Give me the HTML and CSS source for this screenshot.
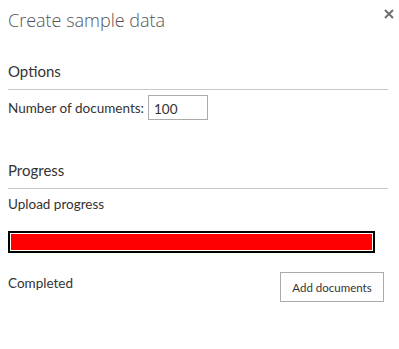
FILE: index.html
```html
<!DOCTYPE html>
<html>
<head>
<meta charset="utf-8">
<link rel="stylesheet" href="styles.css">
</head>
<body>
<div class="dialog">
  <div class="header">
    <div class="title">Create sample data</div>
    <button class="close" aria-label="Close">
      <svg width="10" height="10" viewBox="0 0 10 10"><path d="M1 1 L9 9 M9 1 L1 9" stroke="#707070" stroke-width="2" fill="none"/></svg>
    </button>
  </div>
  <h2 class="section options">Options</h2>
  <div class="field">
    <label class="label" for="num">Number of documents:</label>
    <input id="num" class="input" type="text" value="100">
  </div>
  <h2 class="section progress-head">Progress</h2>
  <div class="sub">Upload progress</div>
  <div class="bar"><div class="fill" style="width:100%"></div></div>
  <div class="footer">
    <div class="status">Completed</div>
    <button class="btn">Add documents</button>
  </div>
</div>
</body>
</html>
```
FILE: styles.css
```css
html, body {
  margin: 0;
  padding: 0;
  background: #fff;
}
body {
  font-family: Lato, "Open Sans", sans-serif;
  color: #333;
}
.dialog {
  position: relative;
  width: 380px;
  padding: 0 11px 0 8px;
}
.header {
  display: flex;
}
.title {
  margin-top: 8px;
  font-family: "Open Sans", sans-serif;
  font-size: 18px;
  font-weight: 300;
  line-height: 24px;
  color: #555;
}
.close {
  position: absolute;
  top: 9px;
  right: 5px;
  width: 10px;
  height: 10px;
  padding: 0;
  border: 0;
  background: none;
  display: flex;
}
.section {
  margin: 0;
  font-size: 15px;
  font-weight: 400;
  line-height: 20px;
  padding-bottom: 8px;
  border-bottom: 1px solid #c8c8c8;
  color: #333;
}
.options {
  margin-top: 29px;
}
.field {
  display: flex;
  align-items: center;
  gap: 4px;
  margin-top: 5px;
}
.label {
  font-size: 13.5px;
  line-height: 20px;
}
.input {
  box-sizing: border-box;
  width: 60px;
  height: 25px;
  border: 1px solid #ababab;
  padding: 2px 5px 0;
  font-family: inherit;
  font-size: 13.5px;
  color: #333;
  outline: none;
}
.progress-head {
  margin-top: 40px;
}
.sub {
  margin-top: 5px;
  font-size: 13.5px;
  line-height: 20px;
}
.bar {
  margin-top: 17px;
  width: 361px;
  height: 16px;
  border: 2px solid #000;
  padding: 1px;
}
.fill {
  height: 100%;
  background: #f00;
}
.footer {
  display: flex;
  justify-content: space-between;
  align-items: flex-start;
  margin-top: 19px;
  padding-right: 4px;
}
.status {
  font-size: 13.5px;
  line-height: 20px;
  margin-top: 1px;
}
.btn {
  box-sizing: border-box;
  width: 104px;
  height: 30px;
  border: 1px solid #ababab;
  background: #fff;
  font-family: inherit;
  font-size: 11.5px;
  color: #333;
  padding: 0;
}
```
